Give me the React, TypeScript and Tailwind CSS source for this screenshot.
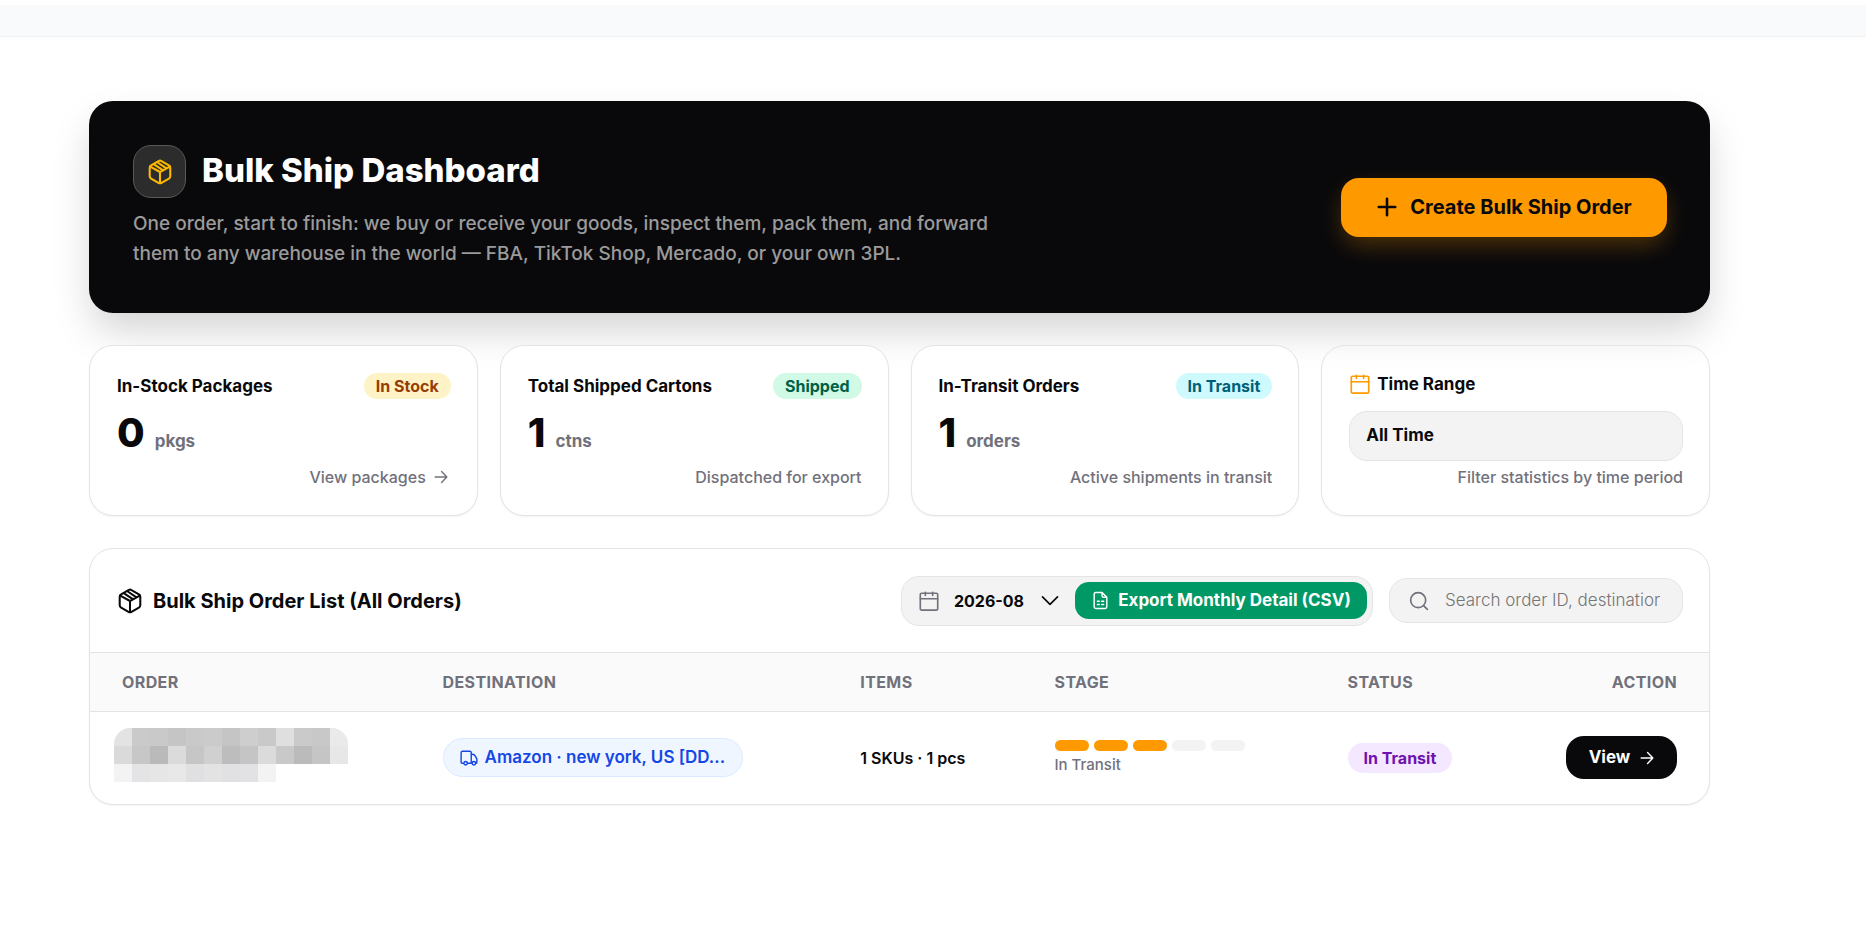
import { ReactNode } from "react";
import clsx from "clsx";

type IconProps = { className?: string };

const Icon = ({
  className,
  stroke = 1.6,
  children,
}: IconProps & { stroke?: number; children: ReactNode }) => (
  <svg
    viewBox="0 0 24 24"
    fill="none"
    stroke="currentColor"
    strokeWidth={stroke}
    strokeLinecap="round"
    strokeLinejoin="round"
    aria-hidden="true"
    className={clsx("shrink-0", className)}
  >
    {children}
  </svg>
);

const BoxIcon = ({ className }: IconProps) => (
  <Icon className={className} stroke={1.9}>
    <path d="M11 1.8Q12 1.2 13 1.8l7.2 4Q21.500 6.5 21.500 8v8q0 1.4-1.3 2.2l-7.2 4q-1 .5-2 0l-7.2-4Q2.500 17.400 2.500 16V8q0-1.5 1.3-2.2Z" />
    <path d="M3 7l9 5 9-5M12 12v10M9.600 3l8 5.400M6.200 4.800l8.400 5.400" />
  </Icon>
);

const CalendarIcon = ({ className }: IconProps) => (
  <Icon className={className} stroke={1.8}>
    <rect x="2.5" y="3.5" width="19" height="18.5" rx="1.5" />
    <path d="M2.5 9.5h19M8 2.500v3.500M16 2.500v3.500" />
  </Icon>
);

const PlusIcon = ({ className }: IconProps) => (
  <Icon className={className} stroke={2.8}>
    <path d="M12 3v18M3 12h18" />
  </Icon>
);

const ArrowIcon = ({ className }: IconProps) => (
  <Icon className={className} stroke={2.4}>
    <path d="M2 12h20M13 2.5l9 9.5-9 9.5" />
  </Icon>
);

const ChevronIcon = ({ className }: IconProps) => (
  <Icon className={className} stroke={2.2}>
    <path d="m2 6.5 10 10 10-10" />
  </Icon>
);

const SearchIcon = ({ className }: IconProps) => (
  <Icon className={className} stroke={2}>
    <circle cx="11" cy="11" r="9" />
    <path d="m17.5 17.5 4.5 4.5" />
  </Icon>
);

const FileIcon = ({ className }: IconProps) => (
  <Icon className={className} stroke={1.8}>
    <path d="M14 2H6Q4 2 4 4v16q0 2 2 2h12q2 0 2-2V8ZM14 2v4q0 2 2 2h4M8 13h2.5M13.5 13H16M8 17h2.5M13.5 17H16" />
  </Icon>
);

const TruckIcon = ({ className }: IconProps) => (
  <Icon className={className} stroke={1.9}>
    <path d="M4.5 19H3q-1.5 0-1.5-1.5V5q0-2 2-2H13q2 0 2 2v14h-5M15 7h1.500q2.500 0 4 2.500l2 4v4q0 1.500-1.500 1.500" />
    <circle cx="7.5" cy="19" r="2.3" />
    <circle cx="18.5" cy="19" r="2.3" />
  </Icon>
);

const STATS = [
  {
    title: "In-Stock Packages",
    badge: "In Stock",
    badgeClass: "bg-amber-100 text-amber-800",
    value: 0,
    unit: "pkgs",
    note: "View packages",
    link: true,
  },
  {
    title: "Total Shipped Cartons",
    badge: "Shipped",
    badgeClass: "bg-emerald-100 text-emerald-800",
    value: 1,
    unit: "ctns",
    note: "Dispatched for export",
  },
  {
    title: "In-Transit Orders",
    badge: "In Transit",
    badgeClass: "bg-cyan-100 text-cyan-800",
    value: 1,
    unit: "orders",
    note: "Active shipments in transit",
  },
];

// redacted order number
const MOSAIC = [
  ["#e3e3e3", "#cacaca", "#c9c9c9", "#c5c5c5", "#c9c9c9", "#cbcbcb", "#c5c5c5", "#cecece", "#c9c9c9", "#dfdfdf", "#cacaca", "#c8c8c8", "#eaeaea"],
  ["#dadada", "#c7c7c7", "#bababa", "#dbdbdb", "#c6c6c6", "#d0d0d0", "#bdbdbd", "#c5c5c5", "#dbdbdb", "#c9c9c9", "#bbbbbb", "#c5c5c5", "#e7e7e7"],
  ["#f3f3f3", "#e4e4e7", "#e6e6e6", "#e8e8e8", "#e0e0e3", "#e3e3e3", "#e1e1e4", "#e2e2e5", "#f3f3f3"],
];

const Hero = () => (
  <section className="flex items-center justify-between gap-8 rounded-3xl bg-[#09090b] pt-11 pr-[43px] pb-11 pl-11 shadow-[0_20px_40px_-4px_rgba(0,0,0,0.18)]">
    <div className="max-w-[890px]">
      <div className="flex items-center gap-4">
        <div className="flex size-[53px] items-center justify-center rounded-[18px] border border-[#595959] bg-[#2c2c2d]">
          <BoxIcon className="size-[26px] text-[#ffb900]" />
        </div>
        <h1 className="pb-1 text-[33px] leading-10 font-extrabold text-white">
          Bulk Ship Dashboard
        </h1>
      </div>
      <p className="mt-[11px] text-[19px] leading-[30px] font-medium text-[#9b9b9b]">
        One order, start to finish: we buy or receive your goods, inspect them,
        pack them, and forward them to any warehouse in the world — FBA, TikTok
        Shop, Mercado, or your own 3PL.
      </p>
    </div>
    <button className="flex h-[59px] w-[326px] shrink-0 items-center justify-center gap-3 rounded-[18px] bg-[#ff9900] text-xl font-bold text-[#09090b] shadow-[0_10px_24px_-3px_rgba(255,153,0,0.3)]">
      <PlusIcon className="size-[22px]" />
      Create Bulk Ship Order
    </button>
  </section>
);

const StatCard = ({ stat }: { stat: (typeof STATS)[number] }) => (
  <div className="flex flex-col rounded-3xl border border-zinc-200 bg-white pt-[27px] pr-[26px] pb-7 pl-[27px] shadow-xs">
    <div className="flex items-center justify-between">
      <h2 className="text-[17px] leading-[26px] font-bold">{stat.title}</h2>
      <span
        className={clsx(
          "rounded-full px-3 text-base leading-[26px] font-bold",
          stat.badgeClass
        )}
      >
        {stat.badge}
      </span>
    </div>
    <p className="mt-3 flex items-baseline gap-[10px]">
      <span className="text-[40px] leading-[44px] font-extrabold">
        {stat.value}
      </span>
      <span className="text-[17px] font-bold text-zinc-500">{stat.unit}</span>
    </p>
    <p className="mt-3 text-right text-base leading-5 font-medium text-zinc-500">
      {stat.link ? (
        <a href="#packages" className="inline-flex items-center gap-2 pr-[3px]">
          {stat.note}
          <ArrowIcon className="size-[14px]" />
        </a>
      ) : (
        stat.note
      )}
    </p>
  </div>
);

const TimeRangeCard = () => (
  <div className="flex flex-col rounded-3xl border border-zinc-200 pt-[25px] pr-[26px] pb-7 pl-[27px] shadow-xs">
    <label
      htmlFor="range"
      className="flex items-center gap-[6px] text-[17px] leading-[26px] font-bold"
    >
      <CalendarIcon className="size-[22px] text-[#ff9900]" />
      Time Range
    </label>
    <select
      id="range"
      className="mt-[14px] h-[50px] w-full appearance-none rounded-[18px] border border-zinc-200 bg-[#f3f3f3] px-4 text-[17px] font-bold"
    >
      <option>All Time</option>
    </select>
    <p className="mt-[6px] text-right text-base leading-5 font-medium text-zinc-500">
      Filter statistics by time period
    </p>
  </div>
);

const ListHeader = () => (
  <div className="flex h-[103px] items-center justify-between pr-[26px] pl-[27px]">
    <h2 className="flex items-center gap-[10px] text-xl font-bold">
      <BoxIcon className="size-[26px]" />
      Bulk Ship Order List (All Orders)
    </h2>
    <div className="flex items-center gap-4">
      <div className="flex h-[50px] w-[472px] items-center rounded-[18px] border border-zinc-200 bg-[#f3f3f3] pr-[5px] pl-4">
        <CalendarIcon className="size-[22px] text-zinc-500" />
        <div className="relative ml-[10px] flex h-full flex-1 items-center">
          <select
            aria-label="Month"
            className="h-full w-full appearance-none bg-transparent pl-1 text-base font-bold"
          >
            <option>2026-08</option>
          </select>
          <ChevronIcon className="pointer-events-none absolute right-4 size-[18px]" />
        </div>
        <button className="flex h-[37px] w-[292px] items-center justify-center gap-2 rounded-[14px] bg-[#009966] text-[17px] font-bold text-white">
          <FileIcon className="size-[19px]" />
          Export Monthly Detail (CSV)
        </button>
      </div>
      <div className="flex h-[45px] w-[294px] items-center gap-4 rounded-[18px] border border-zinc-200 bg-[#f3f3f3] pr-[22px] pl-[19px]">
        <SearchIcon className="size-5 text-zinc-500" />
        <input
          type="text"
          aria-label="Search orders"
          placeholder="Search order ID, destination..."
          className="w-full min-w-0 bg-transparent text-[17px] font-light outline-none placeholder:text-[#757575]"
        />
      </div>
    </div>
  </div>
);

const OrderTable = () => (
  <table className="w-full table-fixed text-left">
    <colgroup>
      <col className="w-[19.8%]" />
      <col className="w-[25.8%]" />
      <col className="w-[12%]" />
      <col className="w-[18.1%]" />
      <col className="w-[12%]" />
      <col />
    </colgroup>
    <thead className="h-[59px] border-y border-zinc-200 bg-[#fafafa] text-base tracking-wide text-zinc-500">
      <tr>
        <th className="px-8 font-bold">ORDER</th>
        <th className="px-8 font-bold">DESTINATION</th>
        <th className="px-8 font-bold">ITEMS</th>
        <th className="px-8 font-bold">STAGE</th>
        <th className="px-8 font-bold">STATUS</th>
        <th className="px-8 text-right font-bold">ACTION</th>
      </tr>
    </thead>
    <tbody>
      <tr className="h-[92px]">
        <td className="pb-[6px] pl-6">
          <div className="w-[234px] overflow-hidden rounded-t-2xl">
            {MOSAIC.map((row, i) => (
              <div key={i} className="flex">
                {row.map((color, j) => (
                  <div
                    key={j}
                    className="size-[18px]"
                    style={{ backgroundColor: color }}
                  />
                ))}
              </div>
            ))}
          </div>
        </td>
        <td className="px-8">
          <a
            href="#destination"
            className="flex h-[39px] w-[300px] items-center gap-[7px] rounded-full border border-blue-100 bg-blue-50 pr-3 pl-4 text-[17px] font-semibold text-blue-700"
          >
            <TruckIcon className="size-[18px]" />
            <span className="truncate">Amazon · new york, US [DD...</span>
          </a>
        </td>
        <td className="px-8 text-base font-semibold whitespace-nowrap">
          1 SKUs · 1 pcs
        </td>
        <td className="px-8">
          <div className="flex gap-[5px]">
            {[1, 2, 3, 4, 5].map((step) => (
              <div
                key={step}
                className={clsx(
                  "h-[11px] w-[34px] rounded-full",
                  step <= 3 ? "bg-[#ff9900]" : "bg-[#f3f3f3]"
                )}
              />
            ))}
          </div>
          <p className="mt-1 text-[15px] leading-5 font-medium text-zinc-500">
            In Transit
          </p>
        </td>
        <td className="px-8">
          <span className="inline-block rounded-full bg-purple-100 px-4 text-base leading-[30px] font-bold whitespace-nowrap text-purple-800">
            In Transit
          </span>
        </td>
        <td className="px-8">
          <button className="ml-auto flex h-[43px] w-[111px] items-center justify-center gap-[10px] rounded-[18px] bg-[#09090b] text-[17px] font-bold text-white">
            View
            <ArrowIcon className="size-[14px]" />
          </button>
        </td>
      </tr>
    </tbody>
  </table>
);

const App = () => {
  return (
    <div className="min-h-screen bg-white font-[Inter,sans-serif] text-[#09090b]">
      <header className="pt-[5px]">
        <div className="h-8 border-b border-[#f1f2f4] bg-[#f9fafc]" />
      </header>
      <main className="flex flex-col gap-8 pt-16 pr-[156px] pb-16 pl-[89px]">
        <Hero />
        <section className="grid grid-cols-4 gap-[22px]">
          {STATS.map((stat) => (
            <StatCard stat={stat} key={stat.title} />
          ))}
          <TimeRangeCard />
        </section>
        <section className="overflow-hidden rounded-3xl border border-zinc-200 bg-white shadow-xs">
          <ListHeader />
          <OrderTable />
        </section>
      </main>
    </div>
  );
};

export default App;
